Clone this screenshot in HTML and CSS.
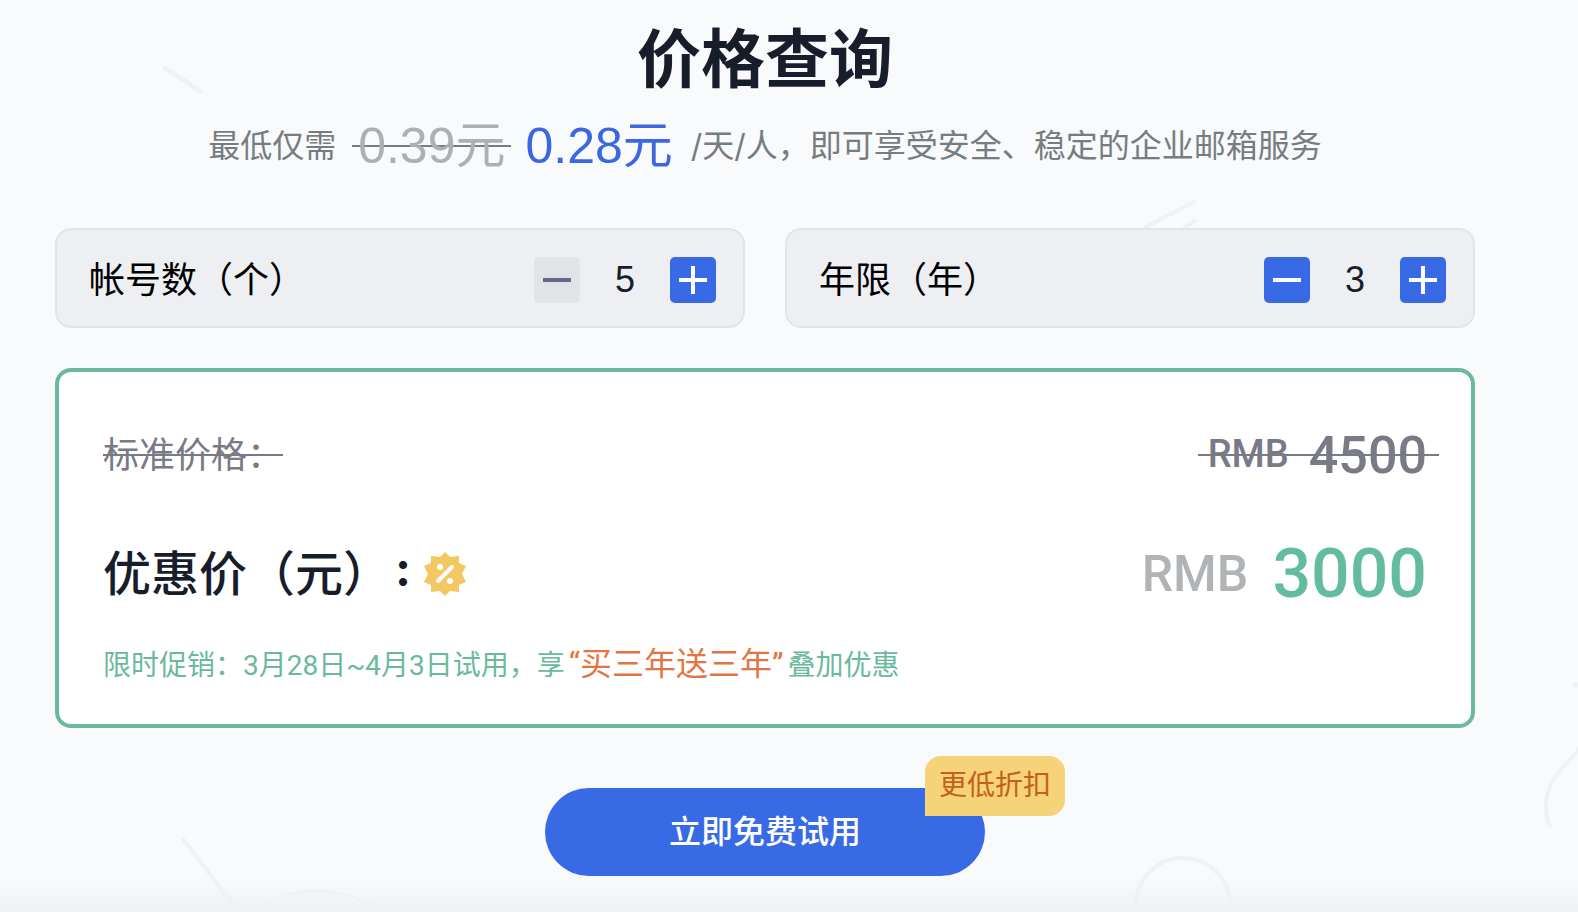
FILE: index.html
```html
<!DOCTYPE html>
<html lang="zh-CN">
<head>
<meta charset="utf-8">
<title>价格查询</title>
<meta name="viewport" content="width=device-width, initial-scale=1">
<link rel="stylesheet" href="styles.css">
</head>
<body>
<main class="pricing">
  <svg class="backdrop" viewBox="0 0 1578 912" preserveAspectRatio="none" fill="none" stroke-linecap="round" aria-hidden="true">
    <path d="M165 68 200 91" stroke-width="5"/>
    <path d="M1144 228 1194 202M1184 228 1195 221" stroke-width="4"/>
    <path d="M183 839 242 916" stroke-width="4"/>
    <circle cx="317" cy="1001" r="110" stroke-width="3"/>
    <circle cx="1183" cy="905" r="47" stroke-width="4"/>
    <path d="M1580 747C1573 761 1546 775 1546 806Q1546 820 1550 826" stroke-width="4"/>
    <path d="M1575 685H1580" stroke-width="5"/>
  </svg>

  <h1 class="title">价格查询</h1>
  <p class="subtitle"><span>最低仅需</span><del class="old-rate">0.39元</del><strong class="new-rate">0.28元</strong><span>/天/人，即可享受安全、稳定的企业邮箱服务</span></p>

  <form class="options">
    <div class="option">
      <label class="option-label" for="accounts">帐号数（个）</label>
      <div class="stepper">
        <button class="step" type="button" disabled aria-label="减少帐号数"><svg class="step-icon" viewBox="0 0 28 28"><path d="M0 14H28"/></svg></button>
        <input class="step-value" id="accounts" type="text" inputmode="numeric" value="5">
        <button class="step" type="button" aria-label="增加帐号数"><svg class="step-icon" viewBox="0 0 28 28"><path d="M0 14H28M14 0V28"/></svg></button>
      </div>
    </div>
    <div class="option">
      <label class="option-label" for="years">年限（年）</label>
      <div class="stepper">
        <button class="step" type="button" aria-label="减少年限"><svg class="step-icon" viewBox="0 0 28 28"><path d="M0 14H28"/></svg></button>
        <input class="step-value" id="years" type="text" inputmode="numeric" value="3">
        <button class="step" type="button" aria-label="增加年限"><svg class="step-icon" viewBox="0 0 28 28"><path d="M0 14H28M14 0V28"/></svg></button>
      </div>
    </div>
  </form>

  <section class="quote">
    <div class="row standard">
      <del class="standard-label">标准价格：</del>
      <del class="standard-price"><span class="currency-small">RMB</span><span class="amount-small">4500</span></del>
    </div>
    <div class="row discount">
      <h2 class="discount-label">优惠价（元）<span class="colon">:</span><svg class="percent" viewBox="0 0 44 44" aria-hidden="true">
        <path class="percent-seal" d="M22 0 27 5 36 4 36 11 43 14 39 22 43 30 36 33 36 40 27 39 22 44 17 39 8 40 8 33 1 30 5 22 1 14 8 11 8 4 17 5Z"/>
        <path class="percent-slash" d="M15 29 29 15"/>
        <circle class="percent-dot" cx="17" cy="15" r="3"/>
        <circle class="percent-dot" cx="27" cy="29" r="3"/>
      </svg></h2>
      <p class="discount-price"><span class="currency">RMB</span><span class="amount">3000</span></p>
    </div>
    <p class="promo">限时促销：3月28日~4月3日试用，享<em class="promo-deal">“买三年送三年”</em>叠加优惠</p>
  </section>

  <div class="action">
    <button class="trial" type="button">立即免费试用<span class="badge">更低折扣</span></button>
  </div>
</main>
</body>
</html>
```
FILE: styles.css
```css
* {
  box-sizing: border-box;
}

body {
  margin: 0;
  background: #f9fafc;
  color: #181d2b;
  font-family: "Liberation Sans", "Noto Sans CJK SC", sans-serif;
  line-height: 1.25;
}

h1, h2, p {
  margin: 0;
}

button, input {
  font: inherit;
}

.pricing {
  position: relative;
  min-height: 100vh;
  padding: 14px 103px 36px 55px;
  background: linear-gradient(to top, #f0f1f3, #f9fafc 36px);
  overflow: hidden;
}

.backdrop {
  position: absolute;
  inset: 0;
  width: 100%;
  height: 100%;
  stroke: #f0f1f3;
}

.title,
.subtitle,
.options,
.quote,
.action {
  position: relative;
}

.title {
  font-family: Inter, "Noto Sans CJK SC", sans-serif;
  font-size: 64px;
  font-weight: 600;
  line-height: 90px;
  text-align: center;
}

.subtitle {
  display: flex;
  align-items: center;
  justify-content: center;
  margin-top: 12px;
  color: #777c80;
  font-family: Inter, "Noto Sans CJK SC", sans-serif;
  font-size: 32px;
  line-height: 60px;
}

.old-rate,
.new-rate {
  font-family: "Liberation Sans", "Noto Sans CJK SC", sans-serif;
  font-size: 50px;
  font-weight: 400;
}

.old-rate {
  margin: 0 14px 0 16px;
  padding: 0 6px;
  color: #adb0b2;
  background: linear-gradient(#777c80, #777c80) center / 100% 2px no-repeat;
  text-decoration: none;
}

.new-rate {
  margin-right: 18px;
  color: #3c67e1;
}

.options {
  display: grid;
  grid-template-columns: 1fr 1fr;
  gap: 40px;
  margin-top: 52px;
}

.option {
  display: flex;
  align-items: center;
  justify-content: space-between;
  height: 100px;
  padding: 4px 27px 0 32px;
  border: 2px solid #e3e4e7;
  border-radius: 16px;
  background: #eeeff3;
}

.option-label {
  color: #000;
  font-size: 36px;
}

.stepper {
  display: flex;
  align-items: center;
}

.step {
  display: grid;
  place-items: center;
  width: 46px;
  height: 46px;
  padding: 0;
  border: 0;
  border-radius: 5px;
  background: #386ae6;
  color: #fff;
}

.step:disabled {
  background: #e0e4e6;
  color: #68678b;
}

.step-icon {
  width: 28px;
  height: 28px;
  stroke: currentColor;
  stroke-width: 4;
}

.step-value {
  width: 90px;
  height: 46px;
  padding: 0;
  border: 0;
  background: transparent;
  color: #181d2b;
  font-size: 36px;
  text-align: center;
}

.quote {
  margin-top: 40px;
  padding: 48px 32px 35px 44px;
  border: 4px solid #6bb99d;
  border-radius: 16px;
  background: #fff;
}

.row {
  display: flex;
  align-items: center;
  justify-content: space-between;
}

.standard {
  height: 70px;
  color: #787a86;
}

.standard-label,
.standard-price {
  background: linear-gradient(currentColor, currentColor) center / 100% 2px no-repeat;
  text-decoration: none;
}

.standard-label {
  font-size: 36px;
}

.standard-price,
.discount-price {
  display: flex;
  align-items: center;
  font-family: Roboto, "Liberation Sans", sans-serif;
  font-weight: 500;
}

.standard-price {
  gap: 20px;
  padding: 0 12px 0 10px;
}

.currency-small {
  font-size: 38px;
}

.amount-small {
  font-size: 52px;
}

.discount {
  height: 96px;
  margin-top: 36px;
}

.discount-label {
  display: flex;
  align-items: center;
  font-family: Inter, "Noto Sans CJK SC", sans-serif;
  font-size: 48px;
  font-weight: 500;
}

.colon {
  padding: 0 12px 0 4px;
  font-feature-settings: "case";
  font-weight: 700;
}

.percent {
  width: 44px;
  height: 44px;
}

.percent-seal {
  fill: #f2c764;
}

.percent-slash {
  fill: none;
  stroke: #fff;
  stroke-width: 4;
  stroke-linecap: round;
}

.percent-dot {
  fill: #fff;
}

.discount-price {
  gap: 24px;
  padding-right: 12px;
}

.currency {
  color: #b1b4b6;
  font-size: 50px;
}

.amount {
  color: #63bd9d;
  font-size: 68px;
}

.promo {
  margin-top: 21px;
  color: #6bb99d;
  font-family: Roboto, "Noto Sans CJK SC", sans-serif;
  font-size: 28px;
  line-height: 46px;
}

.promo-deal {
  margin: 0 4px;
  color: #e27543;
  font-size: 32px;
  font-style: normal;
  line-height: 1;
}

.action {
  display: flex;
  justify-content: center;
  margin-top: 60px;
}

.trial {
  position: relative;
  width: 440px;
  height: 88px;
  border: 0;
  border-radius: 44px;
  background: #386ae6;
  color: #fff;
  font-size: 32px;
  font-weight: 500;
}

.badge {
  position: absolute;
  top: -32px;
  right: -80px;
  width: 140px;
  border-radius: 16px 16px 16px 0;
  background: #f6d279;
  color: #c26020;
  font-size: 28px;
  font-weight: 400;
  line-height: 60px;
}
```
